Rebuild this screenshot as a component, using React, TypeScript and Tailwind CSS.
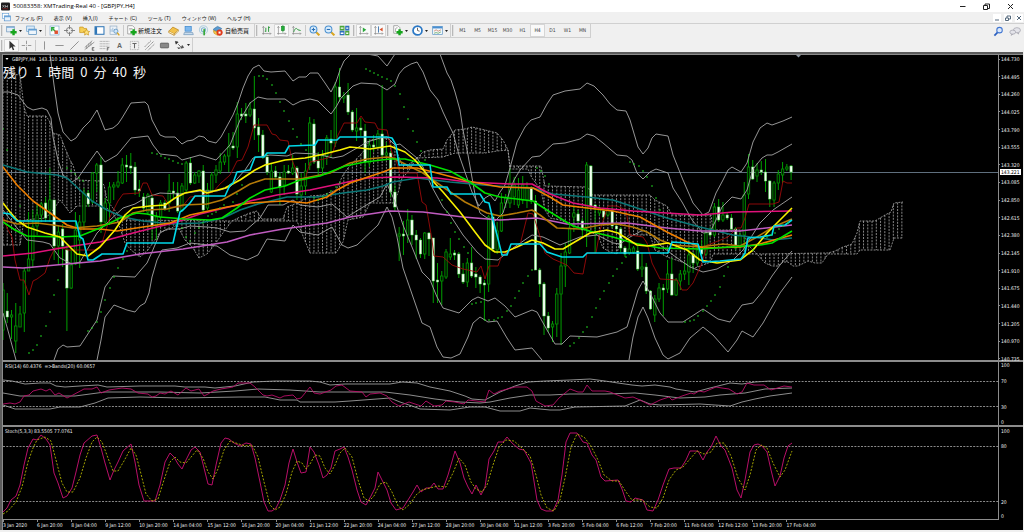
import type { ReactNode } from 'react';
import clsx from 'clsx';

type Point = [number, number];
// high, low, body top, body bottom, 1 = bearish (filled)
type Candle = [number, number, number, number, number];

const BAR_START = 3;
const BAR_STEP = 4.26;

const MENUS = ['ファイル (F)', '表示 (V)', '挿入(I)', 'チャート (C)', 'ツール (T)', 'ウィンドウ (W)', 'ヘルプ (H)'];

const TIMEFRAMES = ['M1', 'M5', 'M15', 'M30', 'H1', 'H4', 'D1', 'W1', 'MN'];

const PRICES = [
  '144.730', '144.495', '144.260', '144.025', '143.790', '143.555', '143.320', '143.085', '142.850',
  '142.615', '142.380', '142.145', '141.910', '141.675', '141.440', '141.205', '140.970', '140.735',
];

const DATES = [
  '3 Jan 2020', '6 Jan 20:00', '8 Jan 04:00', '9 Jan 12:00', '10 Jan 20:00', '14 Jan 04:00',
  '15 Jan 12:00', '16 Jan 20:00', '20 Jan 04:00', '21 Jan 12:00', '22 Jan 20:00', '24 Jan 04:00',
  '27 Jan 12:00', '28 Jan 20:00', '30 Jan 04:00', '31 Jan 12:00', '3 Feb 20:00', '5 Feb 04:00',
  '6 Feb 12:00', '7 Feb 20:00', '11 Feb 04:00', '12 Feb 12:00', '13 Feb 20:00', '17 Feb 04:00',
];

const CANDLES: Candle[] = [
  [283, 340, 290, 330, 0], [293, 323, 311, 317, 1], [310, 339, 315, 317, 0], [303, 353, 326, 341, 0],
  [306, 327, 314, 327, 0], [268, 332, 271, 313, 0], [212, 271, 259, 271, 0], [210, 268, 227, 260, 0],
  [205, 235, 215, 226, 0], [202, 222, 204, 215, 0], [197, 222, 203, 218, 1], [168, 222, 200, 210, 0],
  [200, 260, 200, 246, 1], [226, 264, 232, 246, 0], [224, 267, 229, 246, 1], [245, 331, 250, 288, 1],
  [248, 289, 265, 288, 0], [212, 265, 230, 264, 0], [215, 268, 222, 240, 0], [188, 230, 193, 222, 0],
  [190, 207, 193, 204, 1], [172, 204, 173, 202, 0], [163, 192, 165, 173, 0], [157, 233, 165, 222, 1],
  [198, 226, 203, 222, 0], [182, 225, 187, 203, 0], [182, 200, 185, 187, 0], [171, 188, 182, 186, 0],
  [158, 184, 165, 183, 0], [155, 182, 165, 167, 1], [153, 174, 166, 168, 1], [162, 195, 167, 190, 1],
  [180, 197, 189, 191, 1], [193, 212, 197, 208, 1], [193, 214, 195, 212, 0], [194, 240, 198, 226, 1],
  [212, 240, 217, 226, 0], [200, 220, 203, 217, 0], [200, 211, 203, 209, 1], [174, 212, 191, 203, 0],
  [182, 198, 191, 193, 1], [182, 213, 193, 211, 1], [183, 212, 186, 210, 0], [161, 192, 163, 190, 0],
  [157, 185, 163, 183, 1], [172, 184, 175, 183, 0], [170, 183, 171, 176, 0], [165, 212, 171, 210, 1],
  [183, 210, 190, 208, 0], [172, 193, 175, 191, 0], [165, 183, 170, 175, 0], [153, 174, 162, 171, 0],
  [154, 165, 156, 162, 0], [133, 172, 147, 156, 0], [132, 150, 146, 148, 1], [102, 158, 114, 147, 0],
  [108, 120, 114, 116, 1], [103, 123, 114, 116, 1], [102, 117, 109, 115, 0], [76, 140, 109, 128, 1],
  [118, 152, 127, 135, 1], [130, 159, 135, 157, 1], [153, 175, 157, 172, 1], [163, 193, 171, 192, 0],
  [166, 179, 171, 177, 1], [172, 205, 177, 187, 1], [165, 195, 172, 185, 0], [165, 174, 171, 173, 1],
  [155, 175, 168, 173, 0], [166, 200, 168, 194, 1], [173, 200, 186, 195, 0], [163, 195, 171, 186, 0],
  [117, 170, 123, 165, 0], [119, 164, 124, 162, 1], [152, 177, 161, 168, 1], [150, 175, 156, 168, 0],
  [135, 165, 138, 156, 0], [130, 158, 139, 143, 1], [82, 147, 87, 143, 0], [68, 102, 87, 97, 1],
  [92, 103, 96, 98, 0], [83, 115, 95, 112, 1], [110, 132, 112, 130, 1], [108, 141, 128, 131, 0],
  [118, 136, 128, 130, 1], [124, 173, 131, 162, 1], [139, 167, 145, 163, 0], [135, 152, 145, 147, 1],
  [130, 148, 134, 147, 0], [85, 157, 134, 155, 1], [142, 158, 153, 155, 0], [151, 197, 153, 192, 1],
  [185, 211, 192, 207, 1], [227, 261, 234, 236, 0], [221, 255, 234, 236, 1], [209, 243, 220, 235, 0],
  [215, 245, 220, 235, 1], [230, 259, 235, 240, 1], [238, 258, 240, 254, 1], [232, 259, 233, 254, 0],
  [232, 256, 233, 239, 1], [238, 303, 238, 281, 1], [263, 303, 280, 282, 1], [271, 305, 276, 281, 0],
  [249, 279, 252, 277, 0], [238, 260, 254, 257, 0], [250, 260, 253, 255, 1], [252, 278, 254, 274, 1],
  [263, 284, 274, 282, 1], [258, 287, 263, 282, 0], [247, 278, 263, 276, 1], [267, 288, 274, 277, 1],
  [275, 293, 277, 284, 1], [280, 320, 283, 285, 1], [215, 292, 217, 284, 0], [213, 252, 217, 249, 1],
  [222, 254, 231, 250, 0], [193, 232, 203, 231, 0], [194, 208, 198, 203, 0], [168, 208, 183, 203, 0],
  [177, 205, 185, 197, 0], [178, 208, 190, 205, 0], [176, 204, 185, 200, 0], [182, 208, 187, 200, 0],
  [186, 204, 188, 201, 1], [195, 270, 201, 270, 1], [268, 297, 270, 284, 1], [282, 335, 284, 316, 1],
  [312, 332, 316, 328, 1], [321, 342, 324, 327, 0], [288, 337, 294, 324, 0], [253, 345, 266, 294, 0],
  [243, 287, 252, 266, 0], [223, 254, 228, 253, 0], [207, 232, 213, 217, 0], [210, 223, 214, 221, 1],
  [218, 237, 221, 230, 1], [162, 247, 165, 228, 0], [165, 208, 166, 206, 1], [204, 253, 205, 208, 1],
  [206, 216, 208, 213, 0], [209, 220, 211, 217, 1], [208, 217, 210, 215, 0], [207, 228, 211, 226, 1],
  [224, 233, 226, 229, 1], [227, 252, 229, 248, 1], [246, 257, 248, 254, 1], [243, 255, 249, 253, 0],
  [246, 254, 248, 252, 0], [245, 271, 251, 269, 1], [253, 277, 267, 269, 0], [263, 294, 267, 291, 1],
  [290, 310, 291, 309, 1], [295, 322, 299, 315, 0], [283, 302, 288, 299, 0], [284, 316, 288, 290, 1],
  [260, 293, 274, 289, 0], [258, 296, 274, 295, 1], [278, 296, 280, 295, 0], [270, 290, 274, 281, 0],
  [262, 280, 271, 274, 0], [247, 285, 255, 272, 0], [252, 273, 254, 263, 1], [243, 266, 250, 263, 0],
  [240, 256, 249, 254, 1], [230, 256, 233, 254, 0], [227, 237, 232, 235, 1], [203, 237, 207, 235, 0],
  [199, 222, 207, 220, 1], [202, 222, 215, 220, 0], [213, 220, 215, 218, 1], [214, 231, 218, 229, 1],
  [227, 250, 229, 248, 1], [232, 249, 235, 247, 0], [182, 250, 195, 235, 0], [154, 199, 167, 194, 0],
  [160, 180, 167, 179, 1], [163, 182, 170, 176, 0], [161, 175, 170, 172, 1], [159, 192, 172, 181, 1],
  [180, 207, 181, 199, 1], [181, 207, 183, 200, 0], [170, 190, 174, 183, 0], [162, 183, 169, 175, 0],
  [164, 171, 167, 169, 0], [165, 180, 166, 172, 1],
];

const BANDS = [
  // outer upper
  '50,54 54,85 58,113 63,132 71,141 76,138 83,128 90,121 97,110 101,120 105,130 113,128 118,124 122,118 131,103 145,102 148,105 152,120 160,135 165,137 175,137 182,144 187,141 193,140 199,136 204,137 208,141 216,143 221,137 227,126 233,115 238,103 243,88 248,76 253,68 259,65 264,71 271,72 285,71 293,81 299,77 306,77 310,73 318,73 325,83 331,92 336,82 340,70 344,61 351,54',
  '367,54 378,56 387,66 395,54',
  '440,54 447,73 451,80 455,92 460,110 463,130 468,155 471,172 476,200 480,213 487,218 495,221 503,213 510,190 514,180 520,170 532,157 540,156 553,144 565,143 580,139 587,134 594,136 603,143 617,155 627,156 632,160 637,173 643,179 650,172 656,169 668,173 673,188 682,202 692,220 703,233 710,232 716,220 722,207 732,197 741,199 747,190 753,169 762,158 767,155 772,155 778,152 785,148 792,144',
  '485,198 490,195 495,201 500,192 505,185 510,168 517,142 525,127 531,120 540,117 547,104 553,95 565,91 580,89 587,83 594,86 603,95 610,104 617,110 626,111 630,120 638,147 643,154 648,148 652,138 656,134 668,136 673,155 683,180 693,203 703,215 709,212 716,193 723,180 728,170 732,167 741,172 747,163 753,142 760,128 767,123 772,125 783,121 792,117',
  // inner upper
  '3,92 9,92 18,95 27,107 33,110 42,108 47,110 51,118 53,137 58,160 63,175 72,182 78,178 87,165 97,151 105,162 117,155 131,138 148,136 153,145 160,154 177,156 182,160 200,155 216,160 230,145 240,120 250,103 258,97 267,99 285,99 293,105 301,101 310,99 318,101 325,108 331,114 336,107 341,98 347,92 353,86 361,83 377,84 387,90 395,84 399,74 404,68 411,64 417,62 423,72 430,90 438,100 443,112 450,127 453,133 459,155 466,175 472,192 479,206 485,198',
  // middle
  '3,210 13,223 27,240 43,242 50,244 60,258 72,264 80,262 87,250 97,233 110,220 123,208 135,204 147,197 160,193 180,194 200,191 217,191 230,187 245,170 253,158 270,155 287,156 295,153 317,154 333,158 343,156 357,148 367,142 380,138 387,137 395,145 400,144 417,158 423,167 432,187 443,207 450,215 463,235 477,252 485,259 498,260 513,248 532,235 543,237 560,245 580,237 597,235 613,243 620,244 630,237 643,230 652,235 660,245 673,255 690,267 703,272 717,269 733,260 743,250 760,223 773,210 792,197',
  // inner lower
  '3,313 7,327 16,360',
  '54,360 58,349 63,345 67,347 80,346 97,320 101,303 105,287 113,276 135,277 140,271 147,263 152,252 160,233 167,229 180,229 190,226 207,227 217,228 230,232 245,231 260,218 268,205 283,205 293,200 300,205 318,207 332,204 347,217 363,207 380,197 387,184 393,197 397,207 403,225 412,247 422,272 430,280 437,297 443,308 459,313 472,300 478,297 488,301 495,298 505,306 515,317 532,310 537,312 547,330 555,344 562,344 570,336 597,337 617,332 627,327 633,307 638,290 643,281 650,293 660,313 668,322 683,322 703,309 718,319 730,322 742,305 753,303 762,292 772,276 780,265 792,251',
  // outer lower
  '97,360 101,340 105,317 114,305 127,310 135,312 140,306 145,303 149,293 152,277 157,260 162,250 177,248 190,243 217,246 230,255 247,260 258,255 267,239 285,241 293,225 300,232 318,235 332,227 342,245 348,248 357,245 378,225 387,207 392,217 397,237 403,268 413,297 422,323 430,327 437,347 443,357 451,358 460,354 468,337 473,323 480,317 488,322 497,321 507,338 515,350 532,348 542,360',
  '629,360 633,337 638,317 643,307 648,318 655,338 663,355 668,359 680,353 690,338 703,327 713,335 728,352 737,340 742,331 753,337 763,323 772,307 780,293 792,277',
];

const AVERAGES = [
  { color: '#0b7878', points: '3,165 27,172 57,175 67,178 80,190 92,201 107,210 123,217 143,221 173,224 200,223 223,218 240,210 258,204 287,197 317,197 343,193 367,190 383,186 393,182 417,178 450,182 483,185 510,187 533,188 553,194 587,197 613,200 640,209 667,218 700,227 733,235 760,238 773,240 792,238' },
  { color: '#e0117a', points: '3,256 33,253 67,247 100,242 133,233 177,222 200,214 233,206 250,201 277,195 310,190 343,183 367,178 397,177 437,178 467,182 510,184 532,184 550,194 573,203 600,208 633,211 700,215 733,212 792,211' },
  { color: '#c05cc0', points: '3,267 23,268 67,264 100,261 140,254 183,249 227,242 250,235 283,229 327,223 350,217 390,211 423,212 463,217 500,220 537,218 567,224 627,223 667,228 700,231 740,231 792,225' },
  { color: '#b47a08', points: '3,220 17,224 37,223 53,225 73,228 97,226 120,222 133,213 147,210 167,209 183,205 207,204 222,200 240,190 250,184 265,179 300,179 330,173 350,163 367,159 387,157 393,158 407,165 423,173 443,187 465,202 487,213 500,216 517,213 532,210 540,215 557,228 580,229 600,225 617,224 633,227 647,232 660,240 673,245 700,247 723,244 740,246 757,237 773,227 792,219' },
  { color: '#f08000', points: '3,167 17,185 33,201 50,213 67,225 80,229 100,229 117,231 143,227 170,223 190,215 227,207 250,203 283,201 307,203 327,197 337,190 350,183 383,172 393,168 417,168 437,173 467,181 500,187 533,188 550,197 563,205 587,208 613,211 640,217 667,232 687,242 703,248 740,247 760,244 792,235' },
  { color: '#00e000', points: '3,222 15,230 27,236 60,237 80,236 100,228 120,218 137,213 147,214 160,217 185,219 210,220 222,218 237,208 250,198 265,190 285,186 300,180 320,176 345,166 365,162 390,159 405,159 430,165 450,171 470,182 485,193 500,197 517,199 533,201 550,212 573,226 593,232 613,237 633,243 660,248 700,249 760,245 772,243 792,231' },
  { color: '#f8f000', points: '3,203 10,212 17,220 27,227 45,233 60,237 68,245 77,254 88,256 100,247 115,230 125,215 133,208 150,206 165,205 175,198 185,193 200,190 207,193 225,188 240,180 255,170 265,165 285,160 305,158 320,155 340,150 350,147 370,149 390,146 405,152 415,160 430,178 443,192 460,212 475,232 485,245 495,252 505,252 517,247 532,240 543,243 555,249 563,249 573,243 590,233 607,230 618,233 637,245 647,246 668,243 687,250 700,260 717,263 740,260 753,250 767,233 792,208' },
  { color: '#00d8e8', points: '3,213 10,214 17,221 76,221 80,237 83,239 88,260 93,260 102,254 123,254 127,243 173,243 180,212 183,210 190,203 195,196 225,196 230,185 233,183 237,172 250,170 255,157 264,157 267,153 285,153 289,146 315,145 318,140 337,140 340,137 387,137 392,138 396,145 399,165 430,165 433,187 447,187 451,194 480,194 485,202 489,203 493,220 497,235 502,255 507,255 511,244 540,244 547,252 562,257 583,257 587,253 668,253 672,242 698,244 703,262 720,261 741,259 745,253 748,238 760,237 772,235 774,226 785,225 792,220' },
];

const TENKAN =
  '3,217 8,230 12,237 15,260 20,280 24,280 29,295 33,281 37,279 45,273 50,258 55,248 63,248 68,250 97,250 102,243 110,217 118,201 123,194 139,193 143,183 147,183 152,195 163,196 170,207 182,207 190,197 200,196 213,192 220,184 230,175 237,161 242,160 248,147 254,125 267,125 272,134 276,135 280,140 288,141 292,160 300,180 305,180 310,162 328,158 333,152 338,135 344,123 357,123 361,116 365,122 375,123 378,129 387,130 392,153 396,160 400,173 417,173 422,202 426,205 432,240 434,256 443,257 452,265 463,269 477,272 481,266 485,279 489,266 498,266 502,255 520,245 528,213 533,214 538,230 545,253 553,259 567,265 574,273 583,274 587,253 596,253 600,230 608,206 617,206 626,210 630,235 643,237 647,243 652,263 660,279 677,280 682,290 687,290 693,283 702,263 707,245 713,243 728,237 737,228 741,228 745,218 749,204 773,204 779,202 783,181 787,183 792,183';

const SPAN_A: Point[] = [
  [3, 73], [20, 75], [24, 107], [27, 116], [46, 116], [50, 122], [53, 133], [60, 135], [65, 148], [70, 160],
  [73, 165], [77, 180], [100, 181], [104, 185], [107, 200], [112, 207], [118, 214], [125, 220], [232, 221],
  [240, 217], [250, 213], [257, 211], [262, 219], [283, 219], [287, 207], [297, 203], [310, 196], [323, 195],
  [336, 190], [343, 175], [348, 168], [363, 152], [370, 140], [387, 138], [393, 143], [398, 155], [402, 165],
  [408, 165], [417, 158], [423, 152], [430, 150], [443, 149], [447, 140], [455, 130], [465, 129], [472, 127],
  [485, 130], [497, 133], [503, 140], [508, 150], [510, 166], [541, 166], [545, 186], [588, 187], [592, 195],
  [650, 195], [655, 200], [667, 206], [672, 215], [711, 215], [713, 230], [743, 230], [748, 245], [757, 254],
  [828, 253], [835, 251], [843, 247], [852, 244], [857, 233], [860, 221], [875, 221], [885, 215], [891, 212],
  [894, 203], [903, 202],
];

const SPAN_B: Point[] = [
  [3, 245], [20, 245], [24, 220], [46, 218], [53, 210], [60, 200], [65, 206], [70, 213], [77, 206], [104, 206],
  [112, 212], [118, 222], [125, 243], [131, 250], [140, 257], [148, 250], [155, 240], [160, 232], [170, 229],
  [177, 225], [185, 240], [193, 248], [199, 258], [207, 254], [212, 248], [218, 240], [225, 230], [232, 221],
  [297, 221], [303, 236], [310, 253], [336, 253], [343, 242], [348, 220], [363, 217], [370, 203], [393, 203],
  [398, 193], [402, 178], [408, 172], [417, 158], [443, 157], [455, 153], [485, 153], [497, 151], [508, 150],
  [510, 169], [528, 169], [532, 178], [541, 190], [545, 210], [550, 218], [560, 220], [585, 230], [598, 235],
  [603, 248], [610, 252], [617, 254], [620, 240], [630, 235], [650, 235], [655, 250], [667, 257], [682, 262],
  [695, 268], [711, 262], [713, 254], [757, 254], [765, 263], [772, 266], [778, 266], [783, 262], [788, 262],
  [793, 266], [798, 266], [808, 261], [815, 263], [822, 263], [828, 254], [857, 254], [860, 250], [890, 250],
  [894, 238], [903, 238],
];

const SAR: Point[] = [
  [3, 129], [7, 150], [20, 206], [29, 353], [33, 350], [37, 345], [41, 336], [46, 326], [50, 312], [54, 295],
  [58, 280], [67, 168], [71, 171], [75, 174], [79, 178], [83, 181], [88, 331], [92, 328], [97, 322], [101, 312],
  [105, 300], [110, 288], [114, 277], [118, 268], [123, 259], [127, 251], [152, 153], [157, 154], [161, 156],
  [165, 158], [169, 159], [173, 161], [178, 163], [182, 164], [182, 228], [186, 237], [190, 241], [195, 233],
  [199, 228], [203, 223], [208, 216], [212, 214], [216, 212], [220, 208], [224, 205], [233, 202], [237, 194],
  [242, 185], [259, 76], [263, 76], [267, 79], [272, 85], [276, 93], [280, 102], [284, 111], [289, 121],
  [293, 129], [297, 137], [301, 144], [306, 150], [314, 198], [318, 200], [323, 197], [327, 194], [331, 191],
  [336, 187], [340, 183], [366, 69], [370, 71], [374, 73], [378, 75], [382, 77], [387, 79], [391, 81],
  [395, 86], [400, 94], [404, 107], [408, 119], [413, 131], [417, 142], [421, 151], [425, 160], [442, 200],
  [447, 212], [451, 223], [455, 232], [459, 239], [464, 247], [468, 253], [472, 304], [476, 303], [481, 302],
  [485, 320], [489, 320], [494, 320], [498, 318], [502, 317], [507, 311], [511, 306], [515, 298], [519, 291],
  [523, 283], [528, 276], [532, 270], [537, 168], [541, 171], [545, 176], [549, 184], [570, 346], [574, 343],
  [579, 338], [583, 332], [587, 327], [592, 317], [596, 308], [600, 299], [604, 291], [609, 283], [613, 276],
  [617, 269], [622, 263], [626, 257], [630, 162], [634, 164], [639, 166], [643, 171], [647, 177], [652, 186],
  [656, 198], [660, 210], [685, 322], [690, 321], [694, 320], [698, 316], [703, 311], [707, 306], [711, 301],
  [715, 295], [720, 287], [724, 276], [728, 267], [753, 250], [758, 245], [767, 237], [771, 235], [775, 233],
  [779, 229], [783, 226], [788, 223],
];

const RSI =
  '3,404 10,403 15,404 20,402 24,396 29,395 33,391 41,389 46,391 50,389 55,395 59,393 67,398 71,396 84,389 92,389 97,387 101,393 109,390 122,388 131,389 138,393 148,394 152,397 156,396 160,393 165,394 171,391 178,395 186,388 191,391 199,389 204,396 208,394 213,391 221,389 233,387 238,383 250,383 255,387 263,395 267,396 272,395 280,398 284,396 293,395 297,399 301,398 310,387 314,393 320,394 331,390 336,386 342,385 350,391 362,392 366,397 370,394 380,393 387,396 392,402 399,406 409,402 421,406 426,401 434,406 442,405 446,401 455,402 464,404 468,400 485,402 489,390 494,394 500,391 515,387 527,387 532,391 536,401 545,406 553,405 559,398 570,389 578,392 583,392 587,385 592,391 605,391 610,392 625,398 633,397 640,400 650,405 660,400 669,397 672,400 682,396 691,393 694,394 699,391 704,392 716,387 722,388 729,389 737,394 742,392 747,383 754,385 764,385 771,390 784,386 792,387';

const RSI_BANDS = [
  '3,380 12,381 25,384 40,383 50,383 56,386 65,387 80,386 98,385 107,387 140,386 175,386 185,387 205,387 215,388 235,386 253,382 275,381 310,381 320,382 330,385 345,384 390,384 402,382 417,383 430,387 450,391 465,396 472,399 485,400 500,392 515,386 528,382 545,381 570,380 590,379 605,381 618,383 632,385 642,386 655,385 670,387 676,389 695,392 710,388 730,383 742,384 755,382 770,381 792,382',
  '3,393 20,396 75,396 90,394 105,392 160,392 200,393 235,391 258,389 290,390 320,392 345,392 385,392 410,395 435,399 460,402 480,403 490,402 510,398 530,395 550,395 570,394 605,394 635,393 655,395 680,398 705,397 720,395 745,393 765,389 792,388',
  '3,405 15,409 50,409 60,407 80,407 95,403 108,398 140,397 180,398 240,397 265,397 280,400 297,400 300,402 335,402 350,401 390,398 400,402 412,406 420,409 450,410 470,407 485,407 500,411 520,411 530,408 550,410 560,410 575,407 625,406 640,400 650,404 660,405 700,404 730,406 742,402 755,399 770,396 792,393',
];

const STOCH_MAIN =
  '3,512 7,508 11,500 16,496 20,485 24,465 28,448 33,439 37,440 41,435 46,439 50,445 54,473 58,483 63,498 67,496 72,488 76,472 80,455 84,443 92,436 97,435 101,448 105,463 110,480 114,470 118,462 123,451 131,444 135,462 139,485 144,501 155,501 160,485 165,462 170,453 174,457 178,464 182,469 186,460 191,450 195,447 200,452 204,468 208,484 212,485 216,465 221,443 225,438 229,439 234,443 240,446 246,443 251,444 255,458 260,482 264,502 268,511 272,511 276,508 280,500 285,485 289,463 293,449 297,462 301,473 306,472 310,447 314,452 319,465 323,478 327,475 331,468 335,451 340,449 344,447 348,457 352,470 357,490 361,502 366,505 371,496 375,488 378,472 382,480 387,490 391,503 396,510 403,508 408,500 413,492 417,485 421,492 426,488 430,488 434,483 438,489 443,489 448,475 455,451 460,463 464,478 468,487 472,494 476,485 481,495 485,487 489,459 494,451 498,442 503,442 507,437 512,443 519,449 524,450 531,463 533,475 537,500 541,509 546,511 553,511 558,500 562,475 566,442 570,433 577,433 583,442 587,443 592,455 596,460 601,477 605,481 618,480 622,489 626,501 631,502 635,498 643,500 647,510 653,511 658,500 663,485 669,469 674,468 681,468 686,460 690,451 698,451 703,460 707,452 711,447 716,436 721,446 725,450 732,468 737,490 741,498 745,480 750,452 754,445 758,444 762,446 767,452 771,470 775,486 780,476 784,458 788,446 792,443';

const STOCH_SIGNAL =
  '3,514 8,511 16,502 22,487 28,462 33,448 37,440 45,437 51,441 56,460 62,483 67,492 73,492 80,478 86,458 92,442 97,437 102,442 108,458 113,471 118,471 124,461 131,448 136,455 140,470 146,494 152,501 158,499 164,480 170,462 175,457 180,462 186,463 192,456 197,450 203,458 208,472 213,479 218,469 224,450 230,441 236,443 245,446 252,445 258,457 264,482 270,505 275,510 280,507 286,494 292,472 297,461 302,463 306,469 310,464 315,455 320,456 325,468 330,474 335,465 340,453 345,448 352,457 358,480 364,498 369,501 374,496 380,484 386,482 392,492 398,506 403,510 410,504 416,495 422,490 430,488 438,486 446,487 453,473 459,458 465,465 471,482 476,489 482,492 487,485 493,465 499,447 506,440 514,441 522,448 530,456 536,475 541,495 547,508 554,511 560,500 565,478 571,447 577,434 584,437 591,446 598,460 604,475 612,481 619,481 626,492 632,500 642,500 650,507 657,508 663,498 669,480 676,470 683,467 690,459 697,451 704,454 711,452 717,443 724,443 731,456 738,478 745,490 750,475 756,450 761,445 767,448 773,463 780,477 785,470 792,451';

function valueAt(points: Point[], x: number) {
  for (let i = 1; i < points.length; i++) {
    const [x0, y0] = points[i - 1];
    const [x1, y1] = points[i];
    if (x <= x1) return y0 + ((y1 - y0) * (x - x0)) / (x1 - x0);
  }
  return points[points.length - 1][1];
}

const toPoints = (points: Point[]) => points.map((p) => p.join(',')).join(' ');

/* ---------- toolbar icons, 16x16 grid ---------- */

function Icon({ children }: { children: ReactNode }) {
  return (
    <svg viewBox="0 0 16 16" className="h-[11px] w-[11px] shrink-0" fill="none">
      {children}
    </svg>
  );
}

const Plus = () => <path d="M11 6v9M6.500 10.500h9" stroke="#16a51c" strokeWidth="3.500" />;

const Axes = () => <path d="M3.500 2v12M1.500 12.500h13M2 4l1.500-2L5 4M13 11l1.500 1.500L13 14" stroke="#888" />;

const ICONS: Record<string, ReactNode> = {
  newChart: <><rect x="1" y="2" width="11" height="8" fill="#e4eef8" stroke="#6d94b8" /><path d="M1 3.500h11" stroke="#5b9bd5" /><Plus /></>,
  profiles: <><rect x="1" y="1.500" width="11" height="8" fill="#dcebf8" stroke="#6aa0cc" /><rect x="4" y="6" width="11" height="8" fill="#eef5fb" stroke="#4a86b8" /><path d="M4 7h11" stroke="#5b9bd5" strokeWidth="2" /></>,
  market: <><rect x="1.500" y="1.500" width="13" height="13" fill="#fff" stroke="#7faad0" /><path d="M4 9V4h4" stroke="#27a83a" strokeWidth="2" /><path d="M5 5l4 4" stroke="#27a83a" strokeWidth="2" /><rect x="8" y="8" width="5" height="5" fill="#e05030" /></>,
  crosshair: <><circle cx="8" cy="8" r="4.500" stroke="#777" strokeWidth="1.300" /><path d="M8 0v6M8 10v6M0 8h6M10 8h6" stroke="#777" strokeWidth="1.300" /></>,
  navigator: <><path d="M1 3h5l1 2h4v6H1z" fill="#f6cf55" stroke="#c8931a" /><path d="M11 6l1.500 3 3 .5-2.200 2 .6 3.200-2.900-1.500-2.900 1.500.6-3.200-2.200-2 3-.5z" fill="#ffe27a" stroke="#c8931a" /></>,
  terminal: <><rect x="1.500" y="2.500" width="13" height="11" fill="#fff" stroke="#2e75b6" strokeWidth="1.500" /><path d="M3 3v10" stroke="#2e75b6" strokeWidth="3" /></>,
  tester: <><rect x="1.500" y="1.500" width="10" height="12" fill="#eef3f8" stroke="#8fa9c2" /><path d="M3 10V6M5.500 10V4M8 10V6" stroke="#7fa7cf" /><circle cx="10" cy="9" r="3" fill="#cfe6fa" stroke="#4a86b8" /><path d="M12 11l3 4" stroke="#d9a520" strokeWidth="2" /></>,
  newOrder: <><path d="M2.500 1h7l3 3v9h-10z" fill="#fff" stroke="#888" /><path d="M4.500 5h5M4.500 7h4" stroke="#999" /><Plus /></>,
  book: <><path d="M1 9l6-6 8 4-6 6z" fill="#f2c14a" stroke="#b8801a" /><path d="M1 9v2l8 4v-2M9 15l6-6V7" fill="#fff2c4" stroke="#b8801a" /></>,
  laptop: <><rect x="3" y="2" width="9" height="7" fill="#7db8ee" stroke="#3a86cc" /><path d="M2 11h12l1 3H1z" fill="#cfe0f0" stroke="#6d94b8" /></>,
  signal: <><circle cx="8" cy="7" r="6" stroke="#b4d0e0" strokeWidth="1.500" /><circle cx="8" cy="7" r="3" stroke="#7fb8d0" strokeWidth="1.500" /><path d="M9 6v9" stroke="#38a838" strokeWidth="2.500" /></>,
  auto: <><path d="M2 6l6-4 6 3-3 4H4z" fill="#5a9bd0" stroke="#2f6ea5" /><path d="M2 8l6 2v5l-5-3z" fill="#f6cf55" stroke="#c8931a" /><circle cx="11" cy="11" r="4.500" fill="#e03a1c" /><path d="M9.500 9.500h3v3h-3z" fill="#fff" /></>,
  bars: <><Axes /><path d="M7 4v6M5.500 9H7M11 2v8M11 3.500h2" stroke="#2d9a3c" strokeWidth="1.400" /></>,
  candles: <><Axes /><path d="M10 0v11" stroke="#1c8a2c" /><rect x="8" y="2" width="4" height="6" fill="#22b038" stroke="#1c8a2c" /></>,
  line: <><Axes /><path d="M4 10c2-6 4-6 6-3l4 1" stroke="#2d9a3c" strokeWidth="1.400" /></>,
  zoomIn: <><path d="M10 10l5 5" stroke="#d9a520" strokeWidth="3" /><circle cx="6.500" cy="6.500" r="5" fill="#d8ecfc" stroke="#4a90d0" strokeWidth="1.500" /><path d="M6.500 4v5M4 6.500h5" stroke="#2a6fb5" strokeWidth="1.500" /></>,
  zoomOut: <><path d="M10 10l5 5" stroke="#d9a520" strokeWidth="3" /><circle cx="6.500" cy="6.500" r="5" fill="#d8ecfc" stroke="#4a90d0" strokeWidth="1.500" /><path d="M4 6.500h5" stroke="#2a6fb5" strokeWidth="1.500" /></>,
  tile: <><path d="M1 1h7v7H1zM9 8.500h6V15H9z" fill="#4aa63a" /><path d="M9 1h6v7H9zM1 8.500h7V15H1z" fill="#2f6fbe" /><path d="M2.500 4.500h4M10.500 4.500h3M2.500 12h4M10.500 12h3" stroke="#fff" strokeWidth="2" /></>,
  scroll: <><Axes /><path d="M7 3.500l5 3.500-5 3.500z" fill="#2aa83a" /></>,
  shift: <><Axes /><path d="M8 2v9" stroke="#4a7fb5" strokeWidth="1.500" /><path d="M14 3.500L9.500 6.500 14 9.500z" fill="#d8502a" /></>,
  indicators: <><path d="M2.500 1h6l3 3v8h-9z" fill="#fff" stroke="#888" /><path d="M5 10c0-6 1-6 3-6" stroke="#777" /><Plus /></>,
  clock: <><circle cx="8" cy="8" r="6.500" fill="#fff" stroke="#2b78c5" strokeWidth="2.500" /><path d="M8 4v4l3 1" stroke="#555" strokeWidth="1.300" /></>,
  template: <><rect x="1" y="2" width="14" height="12" fill="#f2f7fb" stroke="#5b93c4" /><path d="M1 3.500h14" stroke="#4a8fd0" strokeWidth="3" /><path d="M3 9l3-2 3 2 4-2" stroke="#c06a4a" /><path d="M3 12l3-1 3 1 4-2" stroke="#4a9a4a" /></>,
  cursor: <path d="M5 1v12l3-3 2 5 2-1-2-4.500h4z" fill="#333" />,
  cross: <path d="M8 1v5M8 10v5M1 8h5M10 8h5M7.500 8h1" stroke="#888" strokeWidth="1.200" />,
  vline: <path d="M8 2v12" stroke="#888" strokeWidth="1.300" />,
  hline: <path d="M2 8h12" stroke="#888" strokeWidth="1.300" />,
  trend: <path d="M2 14L14 2" stroke="#888" strokeWidth="1.300" />,
  channel: <><path d="M1 11L12 1M1 14L15 3M4 8v5M7 5v5M10 3v5" stroke="#777" /><path d="M15 11h-3v4h3M12 13h2" stroke="#444" /></>,
  fibo: <><path d="M1 2h14M1 5.500h14M1 9h14M1 12.500h9" stroke="#888" strokeDasharray="1.500 .7" /><path d="M15 11h-3v4.500M12 13h2" stroke="#444" /></>,
  label: <><rect x="2" y="2" width="12" height="12" stroke="#999" strokeDasharray="1.500 1" /><path d="M5 5h6M8 5v7" stroke="#666" strokeWidth="1.500" /></>,
  pitch: <path d="M1 10L10 1M2 14L14 2M6 15l9-9" stroke="#777" strokeDasharray="2 .7" strokeWidth="1.200" />,
  box: <rect x="2" y="4.500" width="12" height="7" rx="1" fill="#888" stroke="#555" />,
  arrows: <><path d="M2 2l4 1-3 3zM6 6l4 4" fill="#333" stroke="#333" /><path d="M12 8l2 3-4 1zM5 11l2 2 2-2" fill="#444" stroke="#444" /></>,
};

function ToolButton({ icon, label, pressed, menu }: { icon: string; label: string; pressed?: boolean; menu?: boolean }) {
  return (
    <button
      aria-label={label}
      className={clsx(
        'flex h-[13px] shrink-0 items-center rounded-[1px]',
        menu ? 'w-5 gap-[2px] pl-[2px]' : 'w-[15px] justify-center',
        pressed && 'bg-[#f9f9f9] ring-1 ring-inset ring-[#d6d6d6]',
      )}
    >
      <Icon>{ICONS[icon]}</Icon>
      {menu && (
        <svg viewBox="0 0 6 4" className="h-[2px] w-[3px]">
          <path d="M0 0h6L3 4z" fill="#222" />
        </svg>
      )}
    </button>
  );
}

const Divider = () => <div className="mx-px h-[11px] w-px shrink-0 bg-[#cacaca]" />;

const Grip = () => <div className="mx-px h-[11px] w-[2px] shrink-0 border-l border-[#b8b8b8] bg-[#e0e0e0]" />;

function TitleBar() {
  return (
    <header className="flex h-[12px] shrink-0 items-center bg-white pl-px text-black">
      <svg viewBox="0 0 18 16" className="mr-[3px] h-[9px] w-[9px]">
        <rect width="18" height="16" rx="2" fill="#1d1d1f" />
        <path d="M3 5l4 5M7 5l-4 5M9 10V6l2 3 2-3v4" stroke="#eee" fill="none" />
        <path d="M3 12.500h11" stroke="#c22" />
      </svg>
      <h1 className="font-['Open_Sans',sans-serif] text-[6px] leading-[12px]">50083358: XMTrading-Real 40 - [GBPJPY,H4]</h1>
      <div className="ml-auto flex items-center gap-[13px] pr-2">
        <button aria-label="Minimize">
          <svg viewBox="0 0 11 11" className="h-[11px] w-[11px]"><path d="M3 5.500h5.500" stroke="#222" /></svg>
        </button>
        <button aria-label="Restore">
          <svg viewBox="0 0 11 11" className="h-[11px] w-[11px]" fill="none" stroke="#222">
            <path d="M2.500 4.500h4v4h-4zM4 4.500V3h4.500v4.500H7" />
          </svg>
        </button>
        <button aria-label="Close">
          <svg viewBox="0 0 11 11" className="h-[11px] w-[11px]"><path d="M3 3l5 5M8 3l-5 5" stroke="#222" /></svg>
        </button>
      </div>
    </header>
  );
}

function MenuBar() {
  return (
    <nav className="flex h-[12px] shrink-0 items-center border-b border-[#d0d0d0] pl-[2px]">
      <svg viewBox="0 0 16 16" className="mr-[4px] h-[9px] w-[9px]" fill="none">
        <rect x="1" y="1" width="11" height="9" fill="#fff" stroke="#5b9bd5" />
        <rect x="4" y="5" width="11" height="9" fill="#e8f2fc" stroke="#3f83c4" />
        <path d="M4 6.500h11" stroke="#5b9bd5" strokeWidth="2" />
      </svg>
      <div className="flex gap-[11px] font-['Liberation_Sans','Noto_Sans_CJK_JP',sans-serif] text-[5px] leading-[10px] text-[#111]">
        {MENUS.map((name) => (
          <button key={name} className="whitespace-nowrap">{name}</button>
        ))}
      </div>
      <div className="ml-auto flex gap-[3px] pr-px">
        {['M2 6h4', 'M1.500 4h3v2.500h-3zM3 4V2h3.500v3H5', 'M2 2l4 4M6 2L2 6'].map((d, i) => (
          <button key={d} aria-label={['Minimize chart', 'Restore chart', 'Close chart'][i]} className="bg-white">
            <svg viewBox="0 0 8 8" className="block h-2 w-2" fill="none"><path d={d} stroke="#55697c" /></svg>
          </button>
        ))}
      </div>
    </nav>
  );
}

function StandardBar() {
  return (
    <div className="flex h-[14px] shrink-0 items-center">
      <div className="flex h-full items-center border-r border-b border-[#cfcfcf]">
        <Grip />
        <ToolButton icon="newChart" label="New chart" menu />
        <ToolButton icon="profiles" label="Profiles" menu />
        <Divider />
        <ToolButton icon="market" label="Market watch" />
        <ToolButton icon="crosshair" label="Data window" />
        <ToolButton icon="navigator" label="Navigator" />
        <ToolButton icon="terminal" label="Terminal" />
        <ToolButton icon="tester" label="Strategy tester" />
        <Divider />
        <button className="flex w-[41px] items-center gap-px pl-px font-['Noto_Sans_CJK_JP',sans-serif] text-[6px] leading-[13px] whitespace-nowrap text-[#111]">
          <Icon>{ICONS.newOrder}</Icon>
          新規注文
        </button>
        <ToolButton icon="book" label="MetaEditor" />
        <ToolButton icon="laptop" label="Options" />
        <ToolButton icon="signal" label="Signals" />
        <button className="flex w-[43px] items-center gap-[2px] pl-px font-['Noto_Sans_CJK_JP',sans-serif] text-[6px] leading-[13px] whitespace-nowrap text-[#111]">
          <Icon>{ICONS.auto}</Icon>
          自動売買
        </button>
      </div>
      <div className="flex h-full items-center border-r border-b border-[#cfcfcf]">
        <Grip />
        <ToolButton icon="bars" label="Bar chart" />
        <ToolButton icon="candles" label="Candlesticks" pressed />
        <ToolButton icon="line" label="Line chart" />
        <Divider />
        <ToolButton icon="zoomIn" label="Zoom in" />
        <ToolButton icon="zoomOut" label="Zoom out" />
        <ToolButton icon="tile" label="Tile windows" />
        <Grip />
        <ToolButton icon="scroll" label="Auto scroll" pressed />
        <ToolButton icon="shift" label="Chart shift" pressed />
        <Grip />
        <ToolButton icon="indicators" label="Indicators" menu />
        <ToolButton icon="clock" label="Periods" menu />
        <ToolButton icon="template" label="Templates" menu />
      </div>
      <div className="flex h-full items-center border-r border-b border-[#cfcfcf]">
        <Grip />
        {TIMEFRAMES.map((tf) => (
          <button
            key={tf}
            className={
              tf === 'H4'
                ? "h-[13px] w-[15px] bg-[#f9f9f9] font-['DejaVu_Sans_Condensed',sans-serif] text-[5px] leading-[13px] text-[#333] ring-1 ring-[#d6d6d6] ring-inset"
                : "h-[13px] w-[15px] font-['DejaVu_Sans_Condensed',sans-serif] text-[5px] leading-[13px] text-[#444]"
            }
          >
            {tf}
          </button>
        ))}
      </div>
      <div className="ml-auto flex items-center gap-[5px] pr-[3px]">
        <button aria-label="Search">
          <Icon>
            <path d="M2 14l5-5" stroke="#2a5fc0" strokeWidth="2.500" />
            <circle cx="9.500" cy="6" r="4" fill="#dbe9fb" stroke="#3f74d0" strokeWidth="1.500" />
          </Icon>
        </button>
        <button aria-label="Chat">
          <svg viewBox="0 0 18 14" className="h-[9px] w-[12px]" fill="#e4e4ea" stroke="#9a9aa4">
            <ellipse cx="12" cy="5" rx="5.500" ry="4" />
            <ellipse cx="5.500" cy="8" rx="4.500" ry="3.200" />
            <path d="M4 11l-1 2 3-2M14 9l1 2-3-2" />
          </svg>
        </button>
      </div>
    </div>
  );
}

function DrawingBar() {
  return (
    <div className="flex h-[14px] shrink-0 items-center">
      <div className="flex h-full items-center border-r border-[#cfcfcf]">
        <Grip />
        <ToolButton icon="cursor" label="Cursor" pressed />
        <ToolButton icon="cross" label="Crosshair" />
        <Divider />
        <ToolButton icon="vline" label="Vertical line" />
        <ToolButton icon="hline" label="Horizontal line" />
        <ToolButton icon="trend" label="Trendline" />
        <ToolButton icon="channel" label="Equidistant channel" />
        <ToolButton icon="fibo" label="Fibonacci retracement" />
        <button className="h-[13px] w-[15px] font-['Liberation_Sans',sans-serif] text-[7px] leading-[13px] font-bold text-[#666]">A</button>
        <ToolButton icon="label" label="Text label" />
        <ToolButton icon="pitch" label="Andrews pitchfork" />
        <ToolButton icon="box" label="Shapes" />
        <ToolButton icon="arrows" label="Arrows" menu />
      </div>
    </div>
  );
}

/* ---------- chart panes ---------- */

function CandleMark({ index, candle }: { index: number; candle: Candle }) {
  const [high, low, top, bottom, bearish] = candle;
  const x = BAR_START + index * BAR_STEP;
  return (
    <g>
      <path d={`M${x} ${high}V${low}`} stroke="#00a000" strokeWidth="1" />
      <rect
        x={x - 1.2}
        y={top}
        width="2.400"
        height={Math.max(bottom - top, 1)}
        fill={bearish ? '#f2fff2' : '#001800'}
        stroke={bearish ? '#58d858' : '#009400'}
        strokeWidth={bearish ? 0.5 : 0.8}
      />
    </g>
  );
}

function Cloud() {
  const hatch: ReactNode[] = [];
  for (let x = BAR_START; x <= 903; x += BAR_STEP) {
    hatch.push(<path key={x} d={`M${x} ${valueAt(SPAN_A, x)}V${valueAt(SPAN_B, x)}`} />);
  }
  return (
    <g fill="none" stroke="#a8a8a8" strokeWidth="0.800" strokeDasharray="2 1.200">
      {hatch}
      <polyline points={toPoints(SPAN_A)} />
      <polyline points={toPoints(SPAN_B)} />
    </g>
  );
}

function PriceChart() {
  return (
    <svg viewBox="3 55 995 305" preserveAspectRatio="none" className="block h-full w-full" fill="none">
      <path d="M3 172.500H998" stroke="#5f6f7e" />
      <Cloud />
      {CANDLES.map((candle, i) => (
        <CandleMark key={i} index={i} candle={candle} />
      ))}
      <g stroke="#a6a6a6" strokeWidth="0.900">
        {BANDS.map((points) => <polyline key={points} points={points} />)}
      </g>
      <polyline points={TENKAN} stroke="#9c0a0a" strokeWidth="0.900" />
      {AVERAGES.map(({ color, points }) => (
        <polyline key={color} points={points} stroke={color} strokeWidth="1.600" strokeLinejoin="round" />
      ))}
      {SAR.map(([x, y]) => <rect key={`${x}-${y}`} x={x - 0.7} y={y - 0.7} width="1.400" height="1.400" fill="#1fd01f" />)}
      <path d="M796 55h5l-2.500 2.500z" fill="#8c98a4" />
    </svg>
  );
}

function RsiChart() {
  return (
    <svg viewBox="3 362 995 63" preserveAspectRatio="none" className="block h-full w-full" fill="none">
      <path d="M3 381.500H998M3 406.500H998" stroke="#8a8a8a" strokeDasharray="2 1.300" />
      <g stroke="#9c9c9c" strokeWidth="0.900">
        {RSI_BANDS.map((points) => <polyline key={points} points={points} />)}
      </g>
      <polyline points={RSI} stroke="#b80f68" strokeWidth="0.900" />
    </svg>
  );
}

function StochChart() {
  return (
    <svg viewBox="3 427 995 92" preserveAspectRatio="none" className="block h-full w-full" fill="none">
      <path d="M3 446.500H998M3 501.500H998" stroke="#8a8a8a" strokeDasharray="2 1.300" />
      <polyline points={STOCH_MAIN} stroke="#b80f68" strokeWidth="1" />
      <polyline points={STOCH_SIGNAL} stroke="#b4b400" strokeWidth="0.900" strokeDasharray="2 1.500" />
    </svg>
  );
}

function Pane({ className, chart, axis, children }: { className: string; chart: ReactNode; axis: ReactNode; children: ReactNode }) {
  return (
    <section className={clsx('flex min-h-0', className)}>
      <div className="relative min-w-0 flex-1 border-r border-[#8c8c8c]">
        {chart}
        {children}
      </div>
      <div className="relative w-6 shrink-0">{axis}</div>
    </section>
  );
}

const LEVEL = 'absolute left-0 -translate-y-1/2 pl-[2px]';

export default function App() {
  return (
    <div className="flex h-screen flex-col overflow-hidden bg-[#f0f0f0]">
      <TitleBar />
      <MenuBar />
      <StandardBar />
      <DrawingBar />
      <main className="mr-px mb-[2px] flex min-h-0 flex-1 flex-col border-t-2 border-l-2 border-[#5c5c5c] bg-black font-['DejaVu_Sans_Condensed','Liberation_Sans',sans-serif] text-[5px] leading-[6px] text-[#f0f0f0]">
        <div className="flex min-h-0 flex-1 flex-col border-t border-l border-[#8c8c8c]">
          <Pane
            className="flex-[305]"
            chart={<PriceChart />}
            axis={
              <>
                <div className="absolute inset-x-0 top-px -bottom-[2px] flex flex-col justify-between">
                  {PRICES.map((price) => (
                    <span key={price} className="flex items-center gap-px before:h-px before:w-px before:bg-[#8c8c8c]">{price}</span>
                  ))}
                </div>
                <span className="absolute top-[38.5%] right-[2px] left-px -translate-y-1/2 bg-white pl-px text-black">143.221</span>
              </>
            }
          >
            <div className="absolute top-[1px] left-[2px] flex items-center gap-[3px]">
              <svg viewBox="0 0 6 4" className="h-[2px] w-[4px]"><path d="M0 0h6L3 4z" fill="#fff" /></svg>
              <span>GBPJPY,H4</span>
              <span>143.310 143.329 143.124 143.221</span>
            </div>
            <p className="absolute top-[8px] left-0 flex gap-[6px] font-['Noto_Sans_CJK_JP',sans-serif] text-[13px] leading-[18px] whitespace-nowrap text-[#f4f4f4]">
              <span>残り</span> <span>1</span> <span>時間</span> <span>0</span> <span>分</span> <span>40</span> <span>秒</span>
            </p>
          </Pane>
          <div className="h-[2px] shrink-0 bg-[#8c8c8c]" />
          <Pane
            className="flex-[63]"
            chart={<RsiChart />}
            axis={
              <>
                <span className="absolute top-0 left-0 pl-[2px]">100</span>
                <span className={clsx(LEVEL, 'top-[30%]')}>70</span>
                <span className={clsx(LEVEL, 'top-[71%]')}>30</span>
                <span className="absolute bottom-0 left-0 pl-[2px]">0</span>
              </>
            }
          >
            <span className="absolute top-px left-[2px] whitespace-pre">RSI(14) 60.4376  =&gt;Bands(20) 60.0657</span>
          </Pane>
          <div className="h-[2px] shrink-0 bg-[#8c8c8c]" />
          <Pane
            className="flex-[92]"
            chart={<StochChart />}
            axis={
              <>
                <span className="absolute top-px left-0 pl-[2px]">100</span>
                <span className={clsx(LEVEL, 'top-[21%]')}>80</span>
                <span className={clsx(LEVEL, 'top-[81%]')}>20</span>
                <span className="absolute bottom-0 left-0 pl-[2px]">0</span>
              </>
            }
          >
            <span className="absolute top-px left-[2px]">Stoch(5,3,3) 83.5505 77.0761</span>
          </Pane>
          <div className="flex h-[11px] shrink-0">
            <div className="flex min-w-0 flex-1 border-t border-[#8c8c8c]">
              {DATES.map((date) => (
                <span key={date} className="w-[3.42%] shrink-0 whitespace-nowrap before:block before:h-[2px] before:w-px before:bg-[#8c8c8c]">
                  {date}
                </span>
              ))}
            </div>
            <div className="w-6 shrink-0" />
          </div>
        </div>
      </main>
    </div>
  );
}
